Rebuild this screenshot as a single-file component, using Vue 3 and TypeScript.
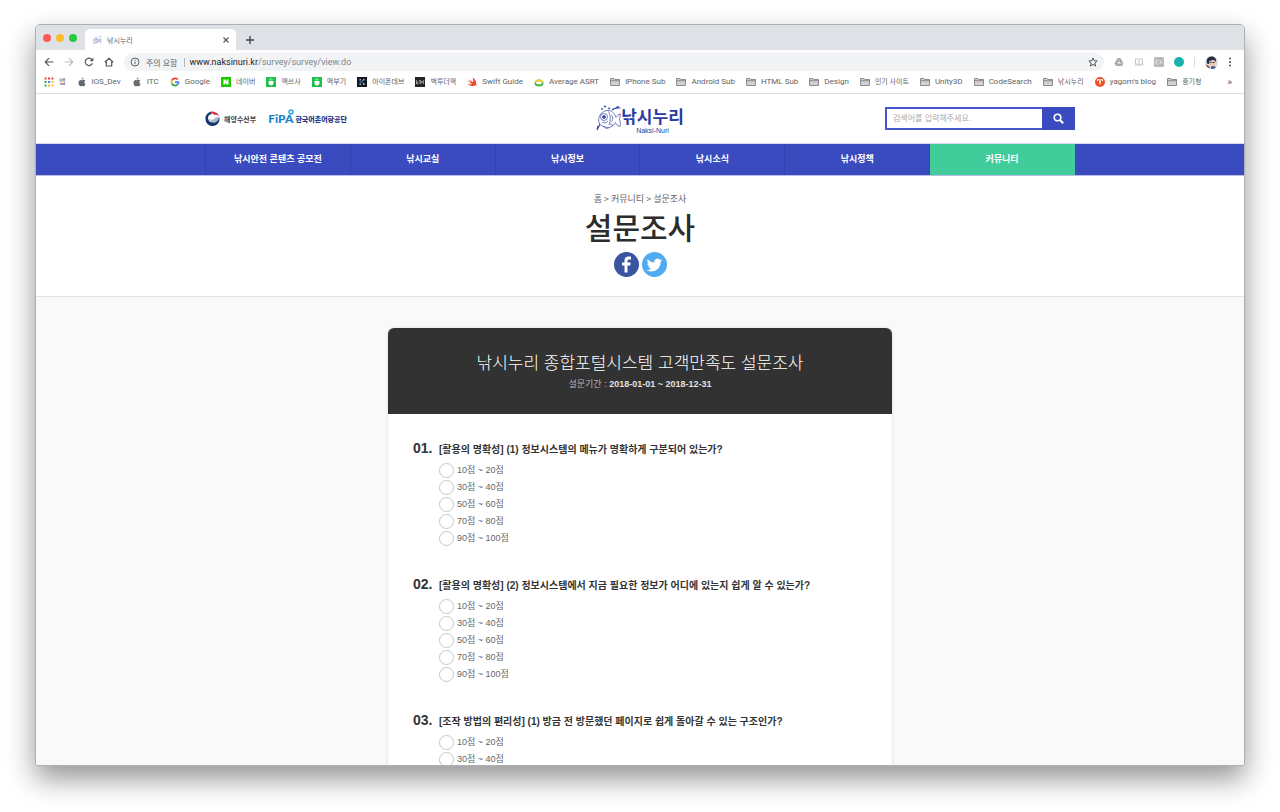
<script setup lang="ts">
import { ref } from 'vue'

type IconName = 'apps' | 'apple' | 'google' | 'naver' | 'cafe' | 'iphonedev' | 'btm' | 'swift' | 'asrt' | 'folder' | 'yagom'
interface Bookmark { icon: IconName; label: string; ko?: boolean }
interface Question { no: string; text: string }

const bookmarks: Bookmark[] = [
  { icon: 'apps', label: '앱', ko: true },
  { icon: 'apple', label: 'iOS_Dev' },
  { icon: 'apple', label: 'ITC' },
  { icon: 'google', label: 'Google' },
  { icon: 'naver', label: '네이버', ko: true },
  { icon: 'cafe', label: '맥쓰사', ko: true },
  { icon: 'cafe', label: '맥부기', ko: true },
  { icon: 'iphonedev', label: '아이폰데브', ko: true },
  { icon: 'btm', label: '백투더맥', ko: true },
  { icon: 'swift', label: 'Swift Guide' },
  { icon: 'asrt', label: 'Average ASRT' },
  { icon: 'folder', label: 'iPhone Sub' },
  { icon: 'folder', label: 'Android Sub' },
  { icon: 'folder', label: 'HTML Sub' },
  { icon: 'folder', label: 'Design' },
  { icon: 'folder', label: '인기 사이트', ko: true },
  { icon: 'folder', label: 'Unity3D' },
  { icon: 'folder', label: 'CodeSearch' },
  { icon: 'folder', label: '낚시누리', ko: true },
  { icon: 'yagom', label: "yagom's blog" },
  { icon: 'folder', label: '중기청', ko: true },
]

const menus = ['낚시안전 콘텐츠 공모전', '낚시교실', '낚시정보', '낚시소식', '낚시정책', '커뮤니티']
const activeMenu = '커뮤니티'

const options = ['10점 ~ 20점', '30점 ~ 40점', '50점 ~ 60점', '70점 ~ 80점', '90점 ~ 100점']
const questions: Question[] = [
  { no: '01.', text: '[활용의 명확성] (1) 정보시스템의 메뉴가 명확하게 구분되어 있는가?' },
  { no: '02.', text: '[활용의 명확성] (2) 정보시스템에서 지금 필요한 정보가 어디에 있는지 쉽게 알 수 있는가?' },
  { no: '03.', text: '[조작 방법의 편리성] (1) 방금 전 방문했던 페이지로 쉽게 돌아갈 수 있는 구조인가?' },
]
const answers = ref<Record<string, string>>({})
const keyword = ref('')
const appColors = ['#e8453c', '#e8453c', '#e8453c', '#34a853', '#4285f4', '#f9bb2d', '#34a853', '#f9bb2d', '#f9bb2d']
</script>

<template>
  <div class="desktop">
    <div class="window">
      <div class="tabstrip">
        <div class="lights">
          <button class="light red" aria-label="닫기"></button>
          <button class="light yellow" aria-label="최소화"></button>
          <button class="light green" aria-label="최대화"></button>
        </div>
        <div class="tab">
          <svg class="favicon" viewBox="0 0 30 30" fill="none" stroke="#8793c9" stroke-width="2">
            <path d="M4 17c1-8 14-10 17 0-3 8-14 9-17 0zM21 16l6-5-1 12-5-5M3 27l5-5M11 6l3-3M20 7l7-4" />
            <circle cx="11" cy="14" r="3" />
            <path d="M15 12l3 9M13 20l-2 5" />
          </svg>
          <span class="tab-title">낚시누리</span>
          <button class="plain" aria-label="탭 닫기">
            <svg width="8" height="8" viewBox="0 0 8 8" stroke="#50545a" stroke-width="1.1"><path d="M1.500 1.500l5 5M6.500 1.500l-5 5" /></svg>
          </button>
        </div>
        <button class="plain new-tab" aria-label="새 탭">
          <svg width="10" height="10" viewBox="0 0 10 10" stroke="#3f4348" stroke-width="1.300"><path d="M5 1v8M1 5h8" /></svg>
        </button>
      </div>

      <div class="toolbar">
        <div class="nav-buttons">
          <button class="plain" aria-label="뒤로">
            <svg width="10" height="10" viewBox="0 0 10 10" fill="none" stroke="#53575c" stroke-width="1.200"><path d="M9.500 5H1.500M5 1.200L1.200 5 5 8.800" /></svg>
          </button>
          <button class="plain" aria-label="앞으로">
            <svg width="10" height="10" viewBox="0 0 10 10" fill="none" stroke="#b9bcc0" stroke-width="1.200"><path d="M.5 5h8M5 1.200L8.800 5 5 8.800" /></svg>
          </button>
          <button class="plain" aria-label="새로고침">
            <svg width="10" height="10" viewBox="0 0 10 10" fill="none" stroke="#53575c" stroke-width="1.200"><path d="M8.400 6.300A3.700 3.700 0 1 1 7.800 2.500" /><path d="M9.300.6v3.600H5.700z" fill="#53575c" stroke="none" /></svg>
          </button>
          <button class="plain" aria-label="홈">
            <svg width="10" height="10" viewBox="0 0 10 10" fill="none" stroke="#53575c" stroke-width="1.200"><path d="M.8 5.200L5 1.300l4.200 3.900M2.300 4.500V9h5.400V4.500" /></svg>
          </button>
        </div>
        <div class="address">
          <svg width="10" height="10" viewBox="0 0 10 10" fill="none" stroke="#5f6368"><circle cx="5" cy="5" r="4" /><path d="M5 4.500v2.800M5 2.700v1" /></svg>
          <span class="warn">주의 요함</span>
          <span class="bar"></span>
          <div class="url" role="textbox" aria-label="주소" contenteditable="true"><b>www.naksinuri.kr</b>/survey/survey/view.do</div>
          <button class="plain" aria-label="북마크 추가">
            <svg width="10" height="10" viewBox="0 0 20 20" fill="none" stroke="#53575c" stroke-width="2"><path d="M10 2l2.300 5.500 6 .5-4.500 4 1.300 6L10 14.800 4.900 18l1.300-6-4.500-4 6-.5z" /></svg>
          </button>
        </div>
        <div class="extensions">
          <button class="plain" aria-label="드라이브">
            <svg width="10" height="10" viewBox="0 0 20 20"><path d="M7 2h6l6 11-3 5H4l-3-5z" fill="#a9a9a9" /><path d="M10 8l3 5H7z" fill="#f5f5f5" /><path d="M4 18l3-5h12M13 13L7 2" stroke="#d9d9d9" fill="none" /></svg>
          </button>
          <button class="plain" aria-label="화면">
            <svg width="10" height="10" viewBox="0 0 20 20" fill="none" stroke="#b5b5b5" stroke-width="1.500"><path d="M3 4h14v10H3zM1 16h18M10 7v4M8 9h4" /></svg>
          </button>
          <button class="plain" aria-label="코드">
            <svg width="10" height="10" viewBox="0 0 20 20"><rect width="20" height="20" rx="3" fill="#b9b9b9" /><path d="M8 6H4v8h4M4 10h3M11 6l5 8M16 6l-5 8" fill="none" stroke="#e6e6e6" stroke-width="1.500" /></svg>
          </button>
          <button class="plain" aria-label="메모">
            <svg width="10" height="10" viewBox="0 0 20 20"><circle cx="10" cy="10" r="10" fill="#12b8a6" /><path d="M6 13V8h8v5M10 13V8" fill="none" stroke="#4f91d8" stroke-width="1.500" /></svg>
          </button>
          <span class="divider"></span>
          <button class="plain" aria-label="프로필">
            <svg width="13" height="13" viewBox="0 0 26 26"><circle cx="13" cy="13" r="13" fill="#d5dde2" /><path d="M5 16C1 9 5 1 13 1c7 0 10 5 9 11l-4-4-9 2-1 6z" fill="#252c40" /><path d="M8 11l9-3 4 6-2 6-6 2-5-5z" fill="#f1c7ad" /><path d="M9 12h4v2H9zM15 12h4v2h-4z" fill="#33374a" /><path d="M12 21l6-1 4 3a13 13 0 0 1-10 3z" fill="#3f5e98" /><path d="M1 17l7 3 2 5.500a13 13 0 0 1-9-8.500z" fill="#993f4c" /></svg>
          </button>
          <button class="plain" aria-label="메뉴">
            <svg width="4" height="10" viewBox="0 0 4 10" fill="#4b4f54"><circle cx="2" cy="1.500" r="1" /><circle cx="2" cy="5" r="1" /><circle cx="2" cy="8.500" r="1" /></svg>
          </button>
        </div>
      </div>

      <div class="bookmarks">
        <div class="bookmark-list">
          <a v-for="(b, i) in bookmarks" :key="i" href="#" class="bookmark" :class="{ ko: b.ko }">
            <svg v-if="b.icon === 'apps'" class="bi" viewBox="0 0 20 20">
              <rect v-for="(c, n) in appColors" :key="n" :x="1 + (n % 3) * 7" :y="1 + Math.floor(n / 3) * 7" width="4" height="4" :fill="c" />
            </svg>
            <svg v-else-if="b.icon === 'apple'" class="bi" viewBox="0 0 20 20" fill="#66696d">
              <path d="M13 1c0 2-1.500 4-3.500 4C9.500 3 11 1.300 13 1zM9.800 6.300C11 6.300 12 5.500 13.300 5.500c1.200 0 2.600.7 3.300 1.900-2.800 1.700-2.300 5.300.5 6.400-.8 2.200-2.300 4.700-4 4.700-1.200 0-1.600-.7-3.100-.7s-2 .7-3.100.7C4.800 18.500 3 14.800 3 11.500c0-3.500 2.200-5.700 4.300-5.700 1 0 1.800.5 2.500.5z" />
            </svg>
            <svg v-else-if="b.icon === 'google'" class="bi" viewBox="0 0 20 20" fill="none" stroke-width="3.500">
              <path d="M15.500 5A7 7 0 0 0 4 6.500" stroke="#ea4335" /><path d="M4 6.500a7 7 0 0 0 0 7" stroke="#fbbc05" /><path d="M4 13.500A7 7 0 0 0 14.500 15.500" stroke="#34a853" /><path d="M14.500 15.500C16 14.200 17 12.500 17 10h-7" stroke="#4285f4" />
            </svg>
            <svg v-else-if="b.icon === 'naver'" class="bi" viewBox="0 0 20 20"><rect width="20" height="20" fill="#1ec800" /><path d="M5 15V5h3.500l3 4.500V5H15v10h-3.500l-3-4.500V15z" fill="#fff" /></svg>
            <svg v-else-if="b.icon === 'cafe'" class="bi" viewBox="0 0 20 20"><rect width="20" height="20" fill="#19c24a" /><path d="M5 9c0-2 10-2 10 0v3c0 3-2 5-5 5s-5-2-5-5z" fill="#fff" /><path d="M7 6c0-2 3-1 3-3M11 6c0-1 2-1 2-2" stroke="#fff" stroke-width="1.500" fill="none" /></svg>
            <svg v-else-if="b.icon === 'iphonedev'" class="bi" viewBox="0 0 20 20"><rect width="20" height="20" fill="#14181f" /><path d="M5 4h3v3H5zM12 4h3v3h-3zM5 13h3v3H5zM12 12h3v4h-3z" fill="#a9b6c8" /><path d="M5 9h5v2H5zM10 6h2v5h-2z" fill="#4a79b8" /></svg>
            <svg v-else-if="b.icon === 'btm'" class="bi" viewBox="0 0 20 20"><rect width="20" height="20" fill="#242424" /><path d="M3 6v8h3v-4H3M8 7h4M10 7v7M12 14V8l2 3 3-4v7" stroke="#c9c9c9" stroke-width="1.300" fill="none" /></svg>
            <svg v-else-if="b.icon === 'swift'" class="bi" viewBox="0 0 20 20"><path d="M1 5c3 3 6 5 8 6-2-2-4-5-5-7 3 3 6 5 8 6.500C13 7 12 4 11 1c5 3 8 8 7 12 2 3 1 5 0 4-2-2-4 1-8 1-4 0-7-2-9-5 4 2 7 2 9 1C6 12 3 8 1 5z" fill="#f2452f" /></svg>
            <svg v-else-if="b.icon === 'asrt'" class="bi" viewBox="0 0 20 20"><ellipse cx="10" cy="12" rx="9" ry="7" fill="#4eb648" /><path d="M1 11c1-8 17-8 18 0z" fill="#e7cf3c" /><ellipse cx="10" cy="12" rx="6" ry="2.500" fill="#fff" /></svg>
            <svg v-else-if="b.icon === 'folder'" class="bi" viewBox="0 0 20 20"><path d="M1 3h7l1.500 2H19v12H1z" fill="#d2d2d2" stroke="#747474" stroke-width="1.600" /><path d="M1 7.500h18" stroke="#747474" stroke-width="1.600" /></svg>
            <svg v-else class="bi" viewBox="0 0 20 20"><circle cx="10" cy="10" r="10" fill="#f05023" /><path d="M5 8V5.500h10V8M10 6v9M8 10h4" stroke="#fff" stroke-width="2.200" fill="none" /></svg>
            <span>{{ b.label }}</span>
          </a>
        </div>
        <button class="plain more" aria-label="북마크 더보기">»</button>
      </div>

      <main class="page">
        <header class="site-header">
          <div class="partners">
            <a href="#" class="mof">
              <svg width="15" height="15" viewBox="0 0 30 30">
                <path d="M10 2C17-1 27 4 29 12c-2-3-6-5-10-4-4-4-8-4-11-2z" fill="#d8324a" />
                <path d="M10 2C4 5 0 10 1 17c1 8 7 13 14 13 8 0 14-6 14-14 0-2 0-3-1-4-1 8-6 12-12 11-6 0-10-4-10-9 0-5 4-8 8-8C12 4 11 3 10 2z" fill="#14386d" />
                <path d="M8 14c3 5 9 4 12 0 3-3 7-2 8 1-1 6-6 9-12 8-5-1-8-5-8-9z" fill="#14386d" opacity="0.35" />
              </svg>
              <span>해양수산부</span>
            </a>
            <a href="#" class="fipa">
              <span class="fipa-mark">FiPA<svg class="fipa-dot" width="6" height="6" viewBox="0 0 6 6"><circle cx="3" cy="3" r="2" fill="#d9f0fb" stroke="#2aa5de" stroke-width="1.400" /></svg></span>
              <span class="fipa-name">한국어촌어항공단</span>
            </a>
          </div>
          <a href="#" class="brand">
            <svg width="25" height="27" viewBox="0 0 50 54" fill="none" stroke="#3646a5" stroke-width="1.400">
              <path d="M7 38C2 26 9 13 22 11c10-1 15 6 18 14 3-2 4-8 9-7-2 5-1 8-2 11 2 4 2 9 1 14-5-1-8-5-9-8-4 7-11 12-20 9-5-1-9-3-12-6z" />
              <circle cx="16" cy="24" r="7" /><circle cx="16" cy="24" r="3" fill="#3646a5" />
              <path d="M25 13c4 7 5 17 1 27M12 34c5 3 9 2 12-2M30 20c4 3 5 8 1 13M28 38l6 3M15 42c2 5 8 6 11 3" />
              <path d="M8 38L2 50l2-8M32 10c4-4 8-5 17-4M40 5l6-2" stroke-width="2.400" />
              <circle cx="18" cy="3" r="1.500" fill="#3646a5" /><circle cx="12" cy="8" r="1.200" fill="#3646a5" /><circle cx="26" cy="7" r="1.400" fill="#3646a5" />
            </svg>
            <span class="brand-text"><span class="brand-ko">낚시누리</span><span class="brand-en">Naksi-Nuri</span></span>
          </a>
          <form class="search" @submit.prevent>
            <input v-model="keyword" type="text" placeholder="검색어를 입력해주세요." aria-label="검색어" />
            <button type="submit" aria-label="검색">
              <svg width="11" height="11" viewBox="0 0 11 11" fill="none" stroke="#fff"><circle cx="4.500" cy="4.500" r="3.300" stroke-width="1.600" /><path d="M7 7l3.200 3.200" stroke-width="2" /></svg>
            </button>
          </form>
        </header>

        <nav class="gnb">
          <div class="gnb-inner">
            <a v-for="m in menus" :key="m" href="#" :class="{ active: m === activeMenu }">{{ m }}</a>
          </div>
        </nav>

        <section class="page-title">
          <div class="crumbs">홈 &gt; 커뮤니티 &gt; 설문조사</div>
          <h1>설문조사</h1>
          <div class="share">
            <a href="#" aria-label="페이스북">
              <svg width="25" height="25" viewBox="0 0 50 50"><circle cx="25" cy="25" r="25" fill="#3a559f" /><path d="M21 41V27h-5v-6h5v-4c0-5 3-8 8-8h5v6h-3.500C28 15 27 16 27 18v3h6.500l-1 6H27v14z" fill="#fff" /></svg>
            </a>
            <a href="#" aria-label="트위터">
              <svg width="25" height="25" viewBox="0 0 50 50"><circle cx="25" cy="25" r="25" fill="#50abf1" /><path d="M40.500 16.300c-1.100.5-2.400.9-3.700 1 1.300-.8 2.300-2 2.800-3.500-1.200.7-2.600 1.300-4 1.500a6.400 6.400 0 0 0-11 5.900c-5.300-.3-10-2.800-13.200-6.700-1.700 3-.8 6.700 2 8.600-1 0-2-.3-2.900-.8 0 3.100 2.200 5.800 5.100 6.400-.9.300-1.900.3-2.900.1.800 2.600 3.200 4.400 6 4.500a13 13 0 0 1-9.500 2.600c13.200 8 28-1.300 28-15.200v-1.100c1.300-.9 2.400-2 3.300-3.300z" fill="#fff" /></svg>
            </a>
          </div>
        </section>

        <section class="survey-area">
          <form class="survey" @submit.prevent>
            <div class="survey-head">
              <h2>낚시누리 종합포털시스템 고객만족도 설문조사</h2>
              <p>설문기간 : <b>2018-01-01 ~ 2018-12-31</b></p>
            </div>
            <div class="survey-body">
              <fieldset v-for="q in questions" :key="q.no" class="question">
                <legend><span class="no">{{ q.no }}</span><span>{{ q.text }}</span></legend>
                <label v-for="o in options" :key="o">
                  <input v-model="answers[q.no]" type="radio" :name="q.no" :value="o" />{{ o }}
                </label>
              </fieldset>
            </div>
          </form>
        </section>
      </main>
    </div>
  </div>
</template>

<style>
body {
  margin: 0;
  background: #fff;
}
</style>

<style scoped>
* {
  box-sizing: border-box;
}
a {
  color: inherit;
  text-decoration: none;
}
svg {
  display: block;
  flex: none;
}
.plain {
  display: flex;
  padding: 0;
  border: 0;
  background: none;
  font: inherit;
  color: inherit;
}
.desktop {
  display: flex;
  height: 100vh;
  padding: 24px 35px 46px;
  overflow: hidden;
  font-family: "Liberation Sans", "Noto Sans CJK KR", sans-serif;
}
.window {
  display: flex;
  flex: 1;
  flex-direction: column;
  min-width: 0;
  overflow: hidden;
  border: 1px solid #aeb0b3;
  border-radius: 5px 5px 3px 3px;
  background: #fff;
  box-shadow: 0 13px 28px rgba(0, 0, 0, 0.42);
}

/* Browser chrome */
.tabstrip,
.toolbar,
.bookmarks {
  display: flex;
  flex: none;
  align-items: center;
  font-family: Roboto, "Noto Sans CJK KR", sans-serif;
  font-size: 8px;
  color: #5f6368;
}
.tabstrip {
  align-items: flex-end;
  height: 25px;
  background: #dee1e6;
}
.lights {
  display: flex;
  gap: 5px;
  width: 49px;
  padding: 0 0 8px 7px;
}
.light {
  width: 8px;
  height: 8px;
  padding: 0;
  border: 0;
  border-radius: 50%;
}
.red { background: #fc5b57; }
.yellow { background: #fdbc2e; }
.green { background: #28c840; }
.tab {
  display: flex;
  align-items: center;
  width: 151px;
  height: 21px;
  padding: 0 6px 0 7px;
  border-radius: 5px 5px 0 0;
  background: #fff;
}
.favicon {
  width: 10px;
  height: 10px;
}
.tab-title {
  flex: 1;
  padding-left: 5px;
  font-size: 7px;
}
.new-tab {
  padding: 0 0 5px 9px;
}
.toolbar {
  height: 24px;
  padding: 0 12px 0 8px;
}
.nav-buttons {
  display: flex;
  gap: 10px;
}
.address {
  display: flex;
  flex: 1;
  align-items: center;
  height: 18px;
  margin-left: 10px;
  padding: 0 6px;
  border-radius: 9px;
  background: #f1f3f4;
}
.warn {
  margin-left: 6px;
}
.bar {
  width: 1px;
  height: 9px;
  margin: 0 4px 0 7px;
  background: #b4b7bb;
}
.url {
  flex: 1;
  font-size: 9px;
  color: #80868b;
}
.url b {
  font-weight: 400;
  color: #202124;
}
.extensions {
  display: flex;
  align-items: center;
  gap: 10px;
  margin-left: 10px;
}
.divider {
  width: 1px;
  height: 10px;
  background: #d6d8db;
}
.bookmarks {
  height: 20px;
  padding: 0 12px 3px 8px;
  border-bottom: 1px solid #dcdee1;
}
.bookmark-list {
  display: flex;
  flex: 1;
  justify-content: space-between;
}
.bookmark {
  display: flex;
  align-items: center;
  gap: 5px;
  line-height: 10px;
  white-space: nowrap;
}
.bookmark.ko {
  font-size: 7px;
}
.bi {
  width: 10px;
  height: 10px;
}
.more {
  margin-left: 26px;
  font-size: 9px;
  font-weight: 700;
}

/* Site */
.page {
  display: flex;
  flex: 1;
  flex-direction: column;
  min-height: 0;
  overflow-y: auto;
  scrollbar-width: none;
}
.site-header,
.gnb-inner {
  width: 100%;
  max-width: 870px;
  margin: 0 auto;
}
.site-header {
  display: grid;
  flex: none;
  grid-template-columns: 1fr auto 1fr;
  align-items: center;
  height: 49px;
}
.partners,
.mof,
.fipa {
  display: flex;
  align-items: center;
}
.partners {
  gap: 12px;
  color: #444;
}
.mof {
  gap: 4px;
  font-size: 7px;
  font-weight: 700;
}
.fipa {
  gap: 2px;
  font-size: 7px;
  font-weight: 900;
  color: #233a86;
}
.fipa-mark {
  position: relative;
  font-family: Lato, sans-serif;
  font-size: 12px;
  line-height: 14px;
  color: #1783c6;
}
.fipa-dot {
  position: absolute;
  top: -3px;
  right: -1px;
}
.brand {
  display: flex;
  align-items: center;
  color: #2b3b9f;
}
.brand-text {
  display: flex;
  flex-direction: column;
  align-items: center;
  padding-top: 4px;
}
.brand-ko {
  font-size: 17px;
  font-weight: 700;
  line-height: 19px;
}
.brand-en {
  font-size: 7px;
  line-height: 7px;
}
.search {
  display: flex;
  justify-self: end;
  width: 190px;
  height: 23px;
}
.search input {
  flex: 1;
  min-width: 0;
  padding: 0 6px;
  border: 2px solid #4457c9;
  border-right: 0;
  border-radius: 0;
  font-family: inherit;
  font-size: 8px;
  outline: 0;
}
.search input::placeholder {
  color: #aaa;
}
.search button {
  display: flex;
  align-items: center;
  justify-content: center;
  width: 33px;
  padding: 0;
  border: 0;
  background: #3a4bc0;
}
.gnb {
  flex: none;
  border-top: 1px solid #d8dbef;
  border-bottom: 1px solid #b9bfe4;
  background: #3a4bc0;
}
.gnb-inner {
  display: grid;
  grid-template-columns: repeat(6, 1fr);
  border-left: 1px solid #3242ac;
}
.gnb a {
  border-right: 1px solid #3242ac;
  font-size: 9px;
  font-weight: 700;
  line-height: 31px;
  text-align: center;
  color: #fff;
}
.gnb a.active {
  border-color: #43cc9b;
  background: #43cc9b;
}
.page-title {
  display: flex;
  flex: none;
  flex-direction: column;
  align-items: center;
  padding: 17px 0 19px;
  border-bottom: 1px solid #e2e2e2;
}
.crumbs {
  font-family: "Noto Sans CJK KR", sans-serif;
  font-size: 9px;
  line-height: 12px;
  color: #666;
}
h1 {
  margin: 6px 0 5px;
  font-size: 30px;
  font-weight: 500;
  line-height: 36px;
  color: #2c2c2c;
}
.share {
  display: flex;
  gap: 3px;
}
.survey-area {
  flex: 1 0 auto;
  padding: 31px 20px 40px;
  background: #f9f9f9;
}
.survey {
  max-width: 504px;
  margin: 0 auto;
  border-radius: 6px;
  background: #fff;
  box-shadow: 0 0 3px rgba(0, 0, 0, 0.12);
}
.survey-head {
  padding: 24px 0;
  border-radius: 6px 6px 0 0;
  text-align: center;
  background: #323232;
}
h2 {
  margin: 0;
  font-size: 17px;
  font-weight: 300;
  line-height: 24px;
  color: #fff;
}
.survey-head p {
  margin: 2px 0 0;
  font-size: 9px;
  line-height: 12px;
  color: #b5b5b5;
}
.survey-head b {
  color: #e2e2e2;
}
.survey-body {
  padding: 22px 25px;
}
.question {
  min-width: 0;
  margin: 0 0 25px;
  padding: 0;
  border: 0;
}
legend {
  display: flex;
  align-items: center;
  height: 24px;
  margin-bottom: 2px;
  padding: 0;
  font-size: 10px;
  font-weight: 700;
  white-space: nowrap;
  color: #333;
}
.no {
  width: 26px;
  font-size: 14px;
}
.question label {
  display: flex;
  align-items: center;
  height: 17px;
  padding-left: 26px;
  font-size: 9px;
  line-height: 17px;
  color: #666;
}
.question input {
  width: 15px;
  height: 15px;
  margin: 0 3px 0 0;
  border: 1px solid #c6c6c6;
  border-radius: 50%;
  background: #fff;
  appearance: none;
}
.question input:checked {
  border: 4px solid #3a4bc0;
}
</style>
